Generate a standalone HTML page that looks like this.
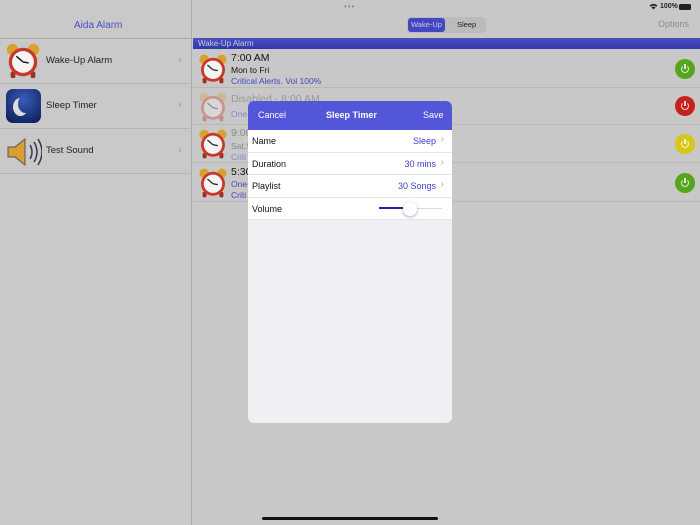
<!DOCTYPE html>
<html><head><meta charset="utf-8"><style>
*{margin:0;padding:0;box-sizing:border-box}
body{width:700px;height:525px;overflow:hidden;background:#c8c8c8;font-family:"Liberation Sans",sans-serif;position:relative;font-size:12px;color:#111}
.abs{position:absolute}
.sb{font-size:7px;font-weight:bold;color:#222}
.lrow{position:absolute;left:0;width:192px;height:45px;border-bottom:1px solid #b5b5b5}
.lrow span{position:absolute;left:46px;top:16px;font-size:9.5px;color:#222}
.chev{position:absolute;color:#999;font-size:11px;font-weight:normal}
.rrow{position:absolute;left:193px;width:507px;border-bottom:1px solid #b8b8b8}
.pw{position:absolute;right:5px;width:20px;height:20px;border-radius:50%}
.pw:after{content:"";position:absolute;left:6px;top:6px;width:6px;height:6px;border:1.5px solid rgba(255,255,255,.8);border-top-color:transparent;border-radius:50%}
.pw:before{content:"";position:absolute;left:9.3px;top:4.5px;width:1.5px;height:5px;background:rgba(255,255,255,.8)}
.m{position:absolute;left:248px;top:101px;width:204px;height:322px;background:#efeff4;border-radius:6px;overflow:hidden}
.mh{height:29px;background:#5356d8;color:#fff;font-size:9px;position:relative}
.mr{height:22.5px;background:#fff;border-bottom:1px solid #e3e3e8;position:relative;font-size:9px}
.mr .l{position:absolute;left:4px;top:6px}
.mr .v{position:absolute;right:16px;top:6px;color:#3d3fc9}
.mr .c{position:absolute;right:8px;top:4px;color:#aaa;font-size:10px}
</style></head><body>
<svg width="0" height="0" style="position:absolute"><symbol id="clk" viewBox="0 0 40 40"><circle cx="9" cy="8" r="6" fill="#d9a030"/><circle cx="31" cy="8" r="6" fill="#d9a030"/><rect x="7" y="31" width="5" height="7" rx="2" fill="#a03020"/><rect x="28" y="31" width="5" height="7" rx="2" fill="#a03020"/><circle cx="20" cy="21" r="15" fill="#c8392b"/><circle cx="20" cy="21" r="11.5" fill="#f4f4f4"/><path d="M20 21 L13 15 M20 21 L26 22" stroke="#222" stroke-width="1.6"/></symbol></svg>
<div class="abs sb" style="left:8px;top:3px">9:31 AM&nbsp;&nbsp; Wed Nov 15</div>
<div class="abs" style="left:344px;top:2px;color:#888;font-size:8px;letter-spacing:1px">•••</div>
<svg class="abs" style="left:649px;top:3px" width="9" height="7"><path d="M0.5 2.5Q4.5 -1 8.5 2.5L7.3 3.7Q4.5 1.2 1.7 3.7Z M2.4 4.4Q4.5 2.6 6.6 4.4L4.5 6.5Z" fill="#222"/></svg>
<div class="abs sb" style="left:660px;top:3px">100%</div>
<div class="abs" style="left:679px;top:4px;width:12px;height:6px;background:#222;border-radius:1.5px"></div>
<div class="abs" style="left:0;top:0;width:192px;height:525px;background:#c9c9c9;border-right:1px solid #aaa"></div>
<div class="abs" style="left:0;top:38px;width:192px;height:1px;background:#aaa"></div>
<div class="abs" style="left:74px;top:20px;font-size:10px;color:#4a4ec2">Aida Alarm</div>
<div class="lrow" style="top:39px"><svg class="abs" style="left:4px;top:3px" width="38" height="38"><use href="#clk"/></svg><span>Wake-Up Alarm</span><b class="chev" style="left:178px;top:15px">›</b></div>
<div class="lrow" style="top:84px"><div class="abs" style="left:6px;top:5px;width:35px;height:34px;border-radius:7px;background:radial-gradient(circle at 50% 30%,#3a5bb8,#0a1a50)"><div class="abs" style="left:12px;top:6px;width:15px;height:18px;border-radius:50%;box-shadow:-5px 3px 0 0 #ddd"></div></div><span>Sleep Timer</span><b class="chev" style="left:178px;top:15px">›</b></div>
<div class="lrow" style="top:129px"><svg class="abs" style="left:6px;top:8px" width="36" height="30"><path d="M2 10h7l10-8v26l-10-8H2z" fill="#d8a030" stroke="#555"/><path d="M24 8q4 7 0 14M28 5q6 10 0 20M32 2q8 13 0 26" stroke="#335" fill="none" stroke-width="1.5"/></svg><span>Test Sound</span><b class="chev" style="left:178px;top:15px">›</b></div>
<div class="abs" style="left:407px;top:17px;width:79px;height:16px;background:#bbb;border-radius:4px"></div>
<div class="abs" style="left:408px;top:18px;width:37px;height:14px;background:#4448c0;border-radius:3px;color:#ccd;font-size:7.5px;text-align:center;line-height:14px">Wake-Up</div>
<div class="abs" style="left:457px;top:18px;font-size:7.5px;line-height:14px;color:#222">Sleep</div>
<div class="abs" style="left:658px;top:19px;font-size:9px;color:#8a8a8a">Options</div>
<div class="abs" style="left:193px;top:38px;width:507px;height:11px;background:linear-gradient(#4c4fc0,#3336a8);color:#ccd;font-size:8px;padding-left:5px;line-height:11px">Wake-Up Alarm</div>
<div class="rrow" style="top:49px;height:39px"><svg class="abs" style="left:4px;top:4px" width="32" height="32"><use href="#clk"/></svg><div class="abs" style="left:38px;top:3px;font-size:10.5px">7:00 AM</div><div class="abs" style="left:38px;top:16px;font-size:8.5px">Mon to Fri</div><div class="abs" style="left:38px;top:27px;font-size:8.5px;color:#4446c0">Critical Alerts. Vol 100%</div><div class="pw" style="top:10px;background:#56a51c"></div></div>
<div class="rrow" style="top:88px;height:37px"><svg class="abs" style="left:4px;top:3px;opacity:.35" width="32" height="32"><use href="#clk"/></svg><div class="abs" style="left:38px;top:5px;font-size:10.5px;color:#999">Disabled - 8:00 AM</div><div class="abs" style="left:38px;top:21px;font-size:8.5px;color:#8888c0">One-</div><div class="pw" style="top:8px;background:#c8201e"></div></div>
<div class="rrow" style="top:125px;height:38px"><svg class="abs" style="left:4px;top:3px" width="32" height="32"><use href="#clk"/></svg><div class="abs" style="left:38px;top:2px;font-size:10.5px;color:#888">9:00</div><div class="abs" style="left:38px;top:16px;font-size:8.5px;color:#888">Sat,S</div><div class="abs" style="left:38px;top:27px;font-size:8.5px;color:#8888c0">Criti</div><div class="pw" style="top:9px;background:#d4c818"></div></div>
<div class="rrow" style="top:163px;height:39px"><svg class="abs" style="left:4px;top:4px" width="32" height="32"><use href="#clk"/></svg><div class="abs" style="left:38px;top:3px;font-size:10.5px">5:30</div><div class="abs" style="left:38px;top:16px;font-size:8.5px;color:#4446c0">One-</div><div class="abs" style="left:38px;top:27px;font-size:8.5px;color:#4446c0">Criti</div><div class="pw" style="top:10px;background:#56a51c"></div></div>
<div class="m">
<div class="mh"><span class="abs" style="left:10px;top:9px">Cancel</span><span class="abs" style="left:78px;top:9px;font-weight:bold">Sleep Timer</span><span class="abs" style="left:175px;top:9px">Save</span></div>
<div class="mr"><span class="l">Name</span><span class="v">Sleep</span><span class="c">›</span></div>
<div class="mr"><span class="l">Duration</span><span class="v">30 mins</span><span class="c">›</span></div>
<div class="mr"><span class="l">Playlist</span><span class="v">30 Songs</span><span class="c">›</span></div>
<div class="mr"><span class="l">Volume</span><div class="abs" style="left:131px;top:10px;width:63px;height:1.5px;background:#ddd"></div><div class="abs" style="left:131px;top:9.5px;width:26px;height:2px;background:#2224b0"></div><div class="abs" style="left:155px;top:4px;width:14px;height:14px;border-radius:50%;background:#fff;box-shadow:0 1px 3px rgba(0,0,0,.35)"></div></div>
</div>
<div class="abs" style="left:262px;top:517px;width:176px;height:3px;border-radius:2px;background:#111"></div>
</body></html>
